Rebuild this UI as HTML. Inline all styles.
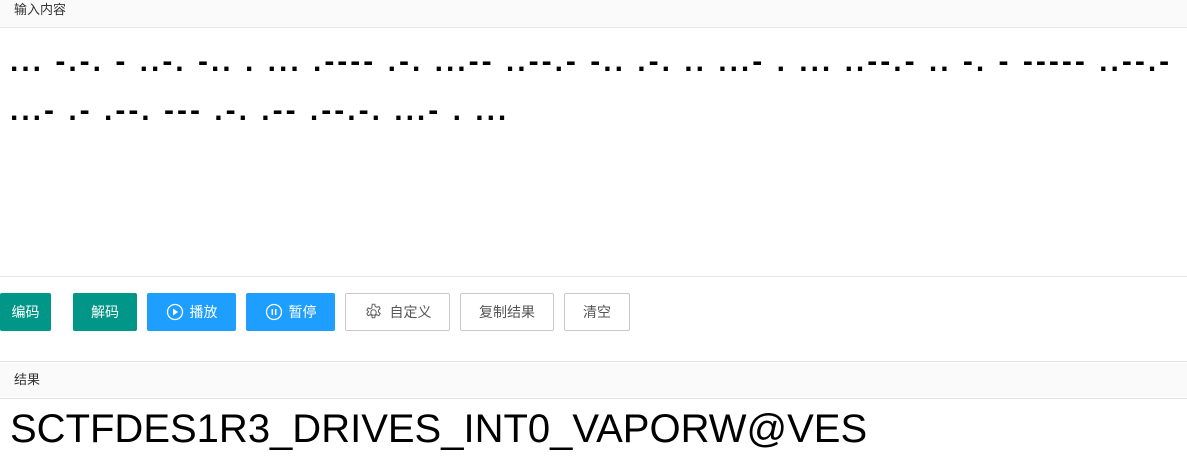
<!DOCTYPE html>
<html><head><meta charset="utf-8"><style>
body{margin:0;width:1187px;height:458px;overflow:hidden;background:#fff;font-family:"Liberation Sans","Noto Sans CJK SC",sans-serif;}
.hd{position:absolute;left:0;width:1187px;background:#fafafa;border-bottom:1px solid #e6e6e6;font-size:13px;color:#333;box-sizing:border-box;padding-left:14px;}
.morse{position:absolute;left:10px;top:37px;width:1180px;font-size:30px;font-weight:bold;line-height:49px;color:#000;letter-spacing:3px;white-space:nowrap;}
.line{position:absolute;left:0;width:1187px;border-top:1px solid #e6e6e6;}
.b{position:absolute;top:293px;height:38px;box-sizing:border-box;border-radius:2px;font-size:14px;display:flex;align-items:center;justify-content:center;color:#fff;}
.g{background:#009688;}.bl{background:#1e9fff;}
.w{background:#fff;border:1px solid #c9c9c9;color:#555;}
.res{position:absolute;left:10px;top:404px;font-size:40px;color:#000;line-height:50px;}
</style></head><body>
<div class="hd" style="top:0;height:28px;line-height:20px;">输入内容</div>
<div class="morse">... -.-. - ..-. -.. . ... .---- .-. ...-- ..--.- -.. .-. .. ...- . ... ..--.- .. -. - ----- ..--.-<br>...- .- .--. --- .-. .-- .--.-. ...- . ...</div>
<div class="line" style="top:276px"></div>
<div class="b g" style="left:0;width:51px">编码</div>
<div class="b g" style="left:73px;width:64px">解码</div>
<div class="b bl" style="left:147px;width:89px"><svg width="18" height="18" viewBox="0 0 18 18" style="margin-right:6px"><circle cx="9" cy="9" r="7.5" fill="none" stroke="#fff" stroke-width="1.3"/><path d="M7 5.5L12 9L7 12.5Z" fill="#fff"/></svg>播放</div>
<div class="b bl" style="left:246px;width:89px"><svg width="18" height="18" viewBox="0 0 18 18" style="margin-right:6px"><circle cx="9" cy="9" r="7.5" fill="none" stroke="#fff" stroke-width="1.3"/><path d="M7.3 6v6M10.7 6v6" stroke="#fff" stroke-width="1.5"/></svg>暂停</div>
<div class="b w" style="left:345px;width:105px"><svg width="19" height="19" viewBox="0 0 18 18" style="margin-right:7px"><circle cx="9" cy="9" r="2.6" fill="none" stroke="#666" stroke-width="1"/><path d="M7.8 1.2h2.4l.4 2.1 1.5.8 2-.9 1.2 2.1-1.6 1.4v1.8l1.6 1.4-1.2 2.1-2-.9-1.5.8-.4 2.1H7.8l-.4-2.1-1.5-.8-2 .9-1.2-2.1 1.6-1.4V8.2L2.7 6.8l1.2-2.1 2 .9 1.5-.8z" fill="none" stroke="#666" stroke-width="1"/></svg>自定义</div>
<div class="b w" style="left:460px;width:94px">复制结果</div>
<div class="b w" style="left:564px;width:66px">清空</div>
<div class="hd" style="top:361px;height:38px;line-height:36px;border-top:1px solid #e6e6e6;">结果</div>
<div class="res">SCTFDES1R3_DRIVES_INT0_VAPORW@VES</div>
</body></html>
